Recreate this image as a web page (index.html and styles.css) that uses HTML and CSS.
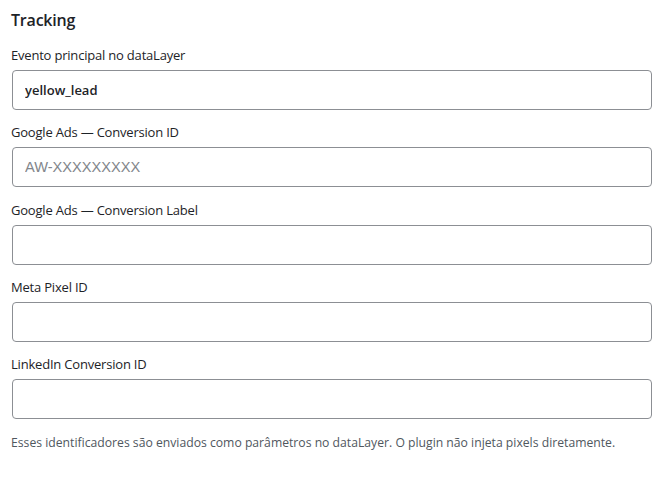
FILE: index.html
```html
<!DOCTYPE html>
<html>
<head>
    <link rel="stylesheet" href="styles.css">
</head>
<body>
<div class="tracking">
    <h2 class="title">Tracking</h2>
    <div class="field">
        <label class="field-label">Evento principal no dataLayer</label>
        <input class="field-input filled" type="text" value="yellow_lead">
    </div>
    <div class="field">
        <label class="field-label">Google Ads — Conversion ID</label>
        <input class="field-input" type="text" placeholder="AW-XXXXXXXXX">
    </div>
    <div class="field">
        <label class="field-label">Google Ads — Conversion Label</label>
        <input class="field-input" type="text">
    </div>
    <div class="field">
        <label class="field-label">Meta Pixel ID</label>
        <input class="field-input" type="text">
    </div>
    <div class="field">
        <label class="field-label">LinkedIn Conversion ID</label>
        <input class="field-input" type="text">
    </div>
    <p class="note">Esses identificadores são enviados como parâmetros no dataLayer. O plugin não injeta pixels diretamente.</p>
</div>
</body>
</html>
```

FILE: styles.css
```css
body {
    margin: 0;
    background-color: #fff;
    font-family: "Open Sans", "Noto Sans", sans-serif;
    color: #1d2327;
}

.tracking {
    width: 640px;
    padding: 9px 12px 0 12px;
}

.title {
    margin: 0 0 13px -1px;
    font-size: 16px;
    font-weight: 600;
    line-height: 22px;
    letter-spacing: -0.2px;
}

.field {
    display: flex;
    flex-direction: column;
    margin-bottom: 11.25px;
}

.field-label {
    margin: 1px 0 5px -1px;
    font-size: 13px;
    font-weight: 500;
    line-height: 20px;
    letter-spacing: -0.2px;
    color: #1d2327;
}

.field-input {
    box-sizing: border-box;
    width: 640px;
    height: 40px;
    margin: 0;
    padding: 0 12px;
    border: 1px solid #8c8f94;
    border-radius: 4px;
    font-family: "Open Sans", sans-serif;
    font-size: 13px;
    color: #1d2327;
    outline: none;
}

.field-input.filled {
    font-weight: 600;
}

.field-input::placeholder {
    font-family: "Liberation Sans", Arial, sans-serif;
    font-size: 14.6px;
    color: #82868b;
}

.note {
    margin: 15px 0 0 -1px;
    font-size: 12.2px;
    line-height: 18px;
    color: #50575e;
}
```
